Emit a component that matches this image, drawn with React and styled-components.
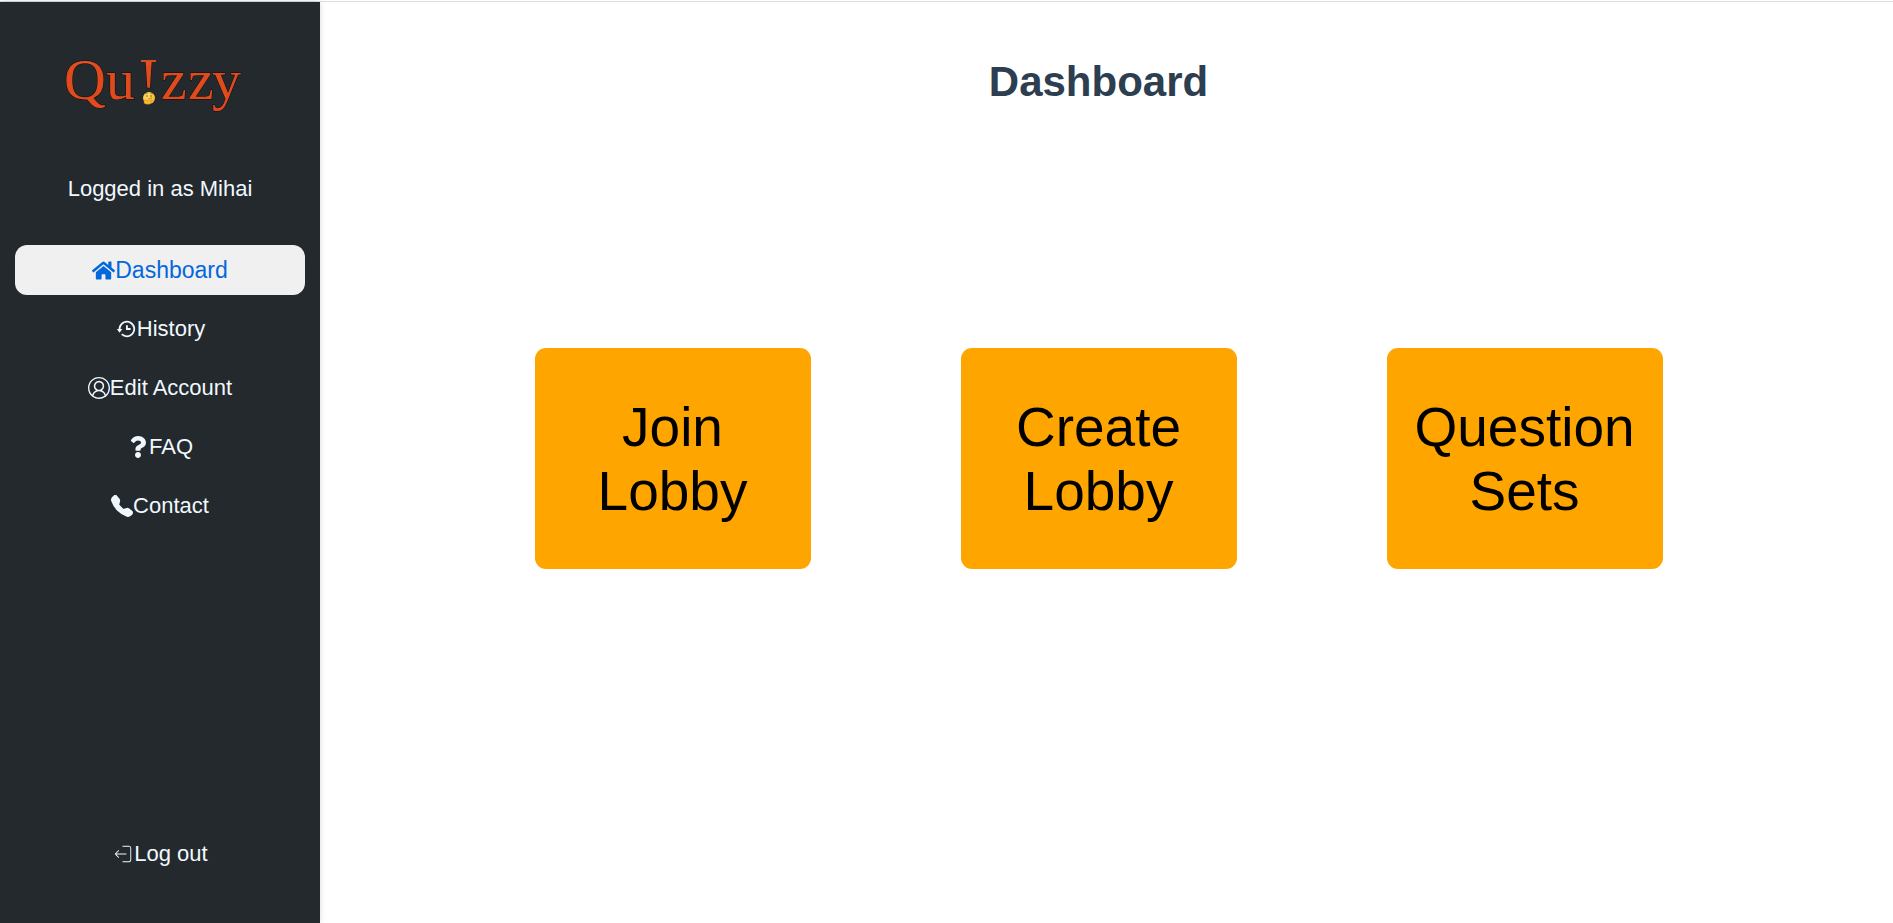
import React from "react";
import styled, { createGlobalStyle } from "styled-components";
import { FaHome, FaQuestion } from "react-icons/fa";
import { BiHistory } from "react-icons/bi";
import { VscAccount } from "react-icons/vsc";
import { BsFillTelephoneFill } from "react-icons/bs";
import { CiLogout } from "react-icons/ci";

const GlobalStyle = createGlobalStyle`
  *, *::before, *::after { box-sizing: border-box; }
  body {
    margin: 0;
    background: #fff;
    color: #2c3e50;
    font-family: "Liberation Sans", Arial, sans-serif;
  }
`;

const Page = styled.div`
  display: flex;
  flex-direction: column;
  min-height: 100vh;
`;

const TopRule = styled.div`
  height: 2px;
  border-bottom: 1px solid #dadce0;
`;

const Body = styled.div`
  display: flex;
  flex: 1;
`;

const Sidebar = styled.aside`
  display: flex;
  flex-direction: column;
  flex: 0 0 320px;
  padding: 32px 15px 44px;
  background: #24292d;
  color: #f0f8ff;
  font-size: 22px;
  line-height: 26px;
  box-shadow: 0 0 6px rgba(0, 0, 0, 0.15);
`;

const LogoLink = styled.a`
  align-self: center;
  height: 88px;
  margin-right: 16px;
`;

const LoggedIn = styled.p`
  margin: 54px 0 43px;
  text-align: center;
`;

const Menu = styled.nav`
  display: flex;
  flex-direction: column;
  flex: 1;
  gap: 9px;
`;

const MenuLink = styled.a`
  display: flex;
  align-items: center;
  justify-content: center;
  height: 50px;
  border-radius: 12px;
  background: ${(p) => (p.$active ? "#f0f0f0" : "transparent")};
  color: ${(p) => (p.$active ? "#0468dc" : "inherit")};
  font-size: ${(p) => (p.$active ? 23 : 22)}px;
  text-decoration: none;
  margin-top: ${(p) => (p.$last ? "auto" : 0)};

  svg { flex: none; }
`;

const Main = styled.main`
  display: flex;
  flex-direction: column;
  flex: 1;
  padding: 56px 16px 48px 0;
`;

const Title = styled.h1`
  margin: 0;
  font-size: 42px;
  line-height: 48px;
  text-align: center;
`;

const Cards = styled.div`
  display: flex;
  flex-wrap: wrap;
  justify-content: center;
  gap: 48px 150px;
  margin-top: 242px;
`;

const Card = styled.button`
  width: 276px;
  min-height: 221px;
  padding: 8px 24px;
  border: 0;
  border-radius: 11px;
  background: #ffa500;
  color: #000;
  font: 55px/64px "Liberation Sans", Arial, sans-serif;
  cursor: pointer;
`;

const Logo = () => (
  <svg width="192" height="88" viewBox="0 0 192 88" role="img" aria-label="Qu!zzy">
    <defs>
      <linearGradient id="ember" x1="0" y1="0" x2="0" y2="1">
        <stop offset="0" stopColor="#f0734a" />
        <stop offset="0.3" stopColor="#e04b1e" />
        <stop offset="1" stopColor="#e04b1e" />
      </linearGradient>
      <radialGradient id="face" cx="0.4" cy="0.3" r="0.8">
        <stop offset="0" stopColor="#ffe36a" />
        <stop offset="1" stopColor="#f5ac1c" />
      </radialGradient>
    </defs>
    <g
      fontFamily='"Liberation Serif", "Times New Roman", serif'
      fontSize="58"
      fill="url(#ember)"
      stroke="#160c0a"
      strokeWidth="1"
      paintOrder="stroke"
    >
      <text x="8" y="65">Q</text>
      <text x="50" y="65">u</text>
      <text x="83" y="65">!</text>
      <text x="105" y="65">z</text>
      <text x="132" y="65">z</text>
      <text x="156" y="65">y</text>
    </g>
    <rect x="85" y="26" width="15" height="2" fill="#e04b1e" />
    <circle cx="93" cy="64" r="6" fill="url(#face)" />
    <path d="M88 67q2-1 4 0l4-1q1 1-1 2l-1 2q-4 1-6-1z" fill="#f8bb30" stroke="#c97a10" strokeWidth="0.4" />
    <circle cx="91" cy="62" r="0.7" fill="#5b3410" />
    <circle cx="95" cy="62" r="0.7" fill="#5b3410" />
    <path d="M89 60l3-1M94 59l3 1M92 65l4-1" stroke="#8a5312" strokeWidth="0.5" fill="none" />
  </svg>
);

const items = [
  { label: "Dashboard", Icon: FaHome, size: 23, active: true },
  { label: "History", Icon: BiHistory, size: 22 },
  { label: "Edit Account", Icon: VscAccount, size: 22 },
  { label: "FAQ", Icon: FaQuestion, size: 22 },
  { label: "Contact", Icon: BsFillTelephoneFill, size: 22 },
  { label: "Log out", Icon: CiLogout, size: 22, last: true },
];

export default function App() {
  return (
    <Page>
      <GlobalStyle />
      <TopRule />
      <Body>
        <Sidebar>
          <LogoLink href="#home"><Logo /></LogoLink>
          <LoggedIn>Logged in as Mihai</LoggedIn>
          <Menu aria-label="Main">
            {items.map(({ label, Icon, size, active, last }) => (
              <MenuLink
                key={label}
                href="#"
                $active={active}
                $last={last}
                aria-current={active ? "page" : undefined}
              >
                <Icon size={size} aria-hidden="true" />
                <span>{label}</span>
              </MenuLink>
            ))}
          </Menu>
        </Sidebar>
        <Main>
          <Title>Dashboard</Title>
          <Cards>
            <Card type="button">Join Lobby</Card>
            <Card type="button">Create Lobby</Card>
            <Card type="button">Question Sets</Card>
          </Cards>
        </Main>
      </Body>
    </Page>
  );
}
